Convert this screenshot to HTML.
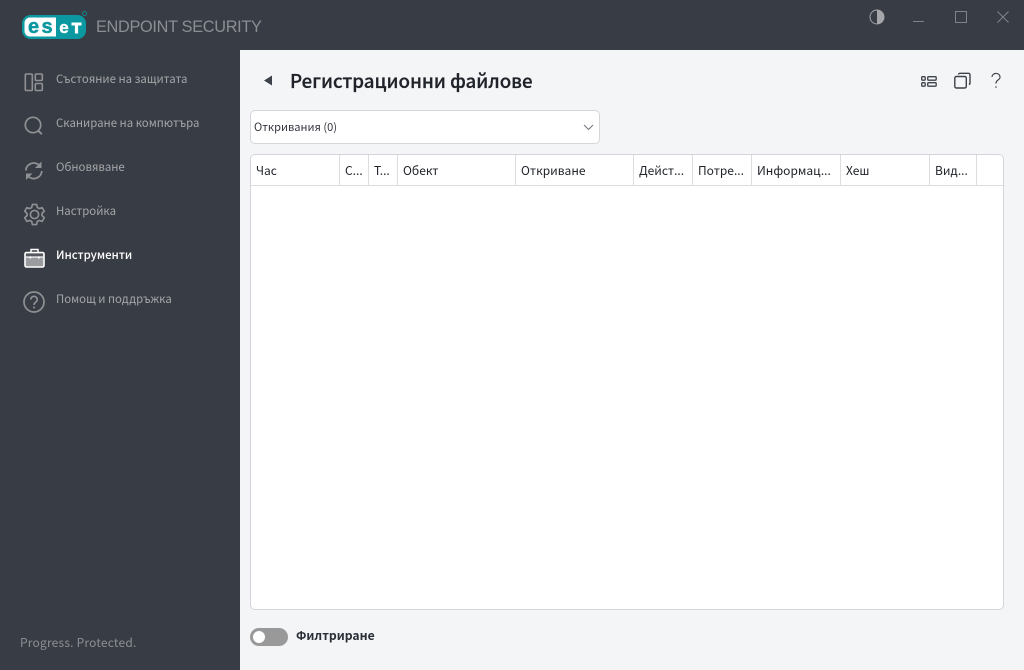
<!DOCTYPE html>
<html><head><meta charset="utf-8">
<style>
*{box-sizing:border-box;margin:0;padding:0}
html,body{width:1024px;height:670px;overflow:hidden;background:#f4f5f7;font-family:"Noto Sans CJK JP","Liberation Sans",sans-serif}
.a{position:absolute;white-space:nowrap}
#top{left:0;top:0;width:1024px;height:50px;background:#383c44}
#side{left:0;top:50px;width:240px;height:620px;background:#383c44}
.n{left:56px;font-size:11.4px;line-height:18px;color:#a4a6a9}
.h{top:162px;font-size:12px;line-height:18px;color:#20232a}
.v{top:155px;width:1px;height:30px;background:#dcdddf}
svg{position:absolute;overflow:visible}
</style></head><body>
<div class="a" id="top"></div><div class="a" id="side"></div>

<svg style="left:22px;top:15px" width="66" height="25" viewBox="0 0 66 25">
<rect x="0" y="0" width="64" height="24" rx="8.500" fill="#0b98a0"/>
<path d="M8 2.500H34V21.500H8a5.500 5.500 0 0 1-5.500-5.500V8A5.500 5.500 0 0 1 8 2.500z" fill="#fff"/>
<text x="11.500" y="18" font-family="Liberation Sans" font-weight="700" font-size="20" fill="#0b98a0" stroke="#0b98a0" stroke-width=".5" text-anchor="middle">e</text>
<text x="25" y="18" font-family="Liberation Sans" font-weight="700" font-size="20" fill="#0b98a0" stroke="#0b98a0" stroke-width=".5" text-anchor="middle">s</text>
<text x="42" y="18" font-family="Liberation Sans" font-weight="700" font-size="17" fill="#fff" stroke="#fff" stroke-width=".4" text-anchor="middle">e</text>
<path d="M49.500 7.500h10v3h-3.400v8h-3.200v-8h-3.400z" fill="#fff"/>
<circle cx="62.500" cy="-1.500" r="2" fill="none" stroke="#0b98a0" stroke-width=".8"/>
</svg>
<div class="a" style="left:96px;top:15px;font-size:16.300px;line-height:24px;color:#8b8e93;font-family:'Liberation Sans',sans-serif;letter-spacing:-.3px">ENDPOINT SECURITY</div>

<svg style="left:869px;top:9px" width="16" height="16" viewBox="0 0 16 16"><circle cx="8" cy="8" r="7" fill="none" stroke="#a4a6a9" stroke-width="1"/><path d="M8 1a7 7 0 0 1 0 14z" fill="#a4a6a9"/></svg>
<svg style="left:913px;top:20px" width="12" height="3"><path d="M0 1.500h11" stroke="#80838a" stroke-width="1"/></svg>
<svg style="left:955px;top:11px" width="12" height="12"><rect x=".5" y=".5" width="11" height="11" fill="none" stroke="#80838a"/></svg>
<svg style="left:997px;top:11px" width="12" height="12"><path d="M.5.5l11 11M11.500.5l-11 11" stroke="#80838a" fill="none"/></svg>

<svg style="left:24px;top:72px" width="20" height="20" fill="none" stroke="#8f9194" stroke-width="1.600"><rect x="1.300" y="2" width="7" height="16.500" rx="1"/><rect x="11.300" y="2" width="7" height="6.500" rx="1"/><rect x="11.300" y="11.500" width="7" height="7" rx="1"/></svg>
<div class="a n" style="top:70px">Състояние на защитата</div>

<svg style="left:24px;top:116px" width="20" height="20" fill="none" stroke="#8f9194" stroke-width="1.700"><circle cx="9" cy="9" r="7.700"/><path d="M14.500 15l3.300 3.200" stroke-width="2"/></svg>
<div class="a n" style="top:114px">Сканиране на компютъра</div>

<svg style="left:24px;top:161px" width="20" height="20" fill="none" stroke="#8f9194" stroke-width="1.800"><path d="M1.800 9.500A8 8 0 0 1 15 4"/><path d="M17.500 0.500v6.500h-6.500z" fill="#8f9194" stroke="none"/><path d="M17.800 10a8 8 0 0 1-13.300 5.500"/><path d="M2 19v-6.500h6.500z" fill="#8f9194" stroke="none"/></svg>
<div class="a n" style="top:158px">Обновяване</div>

<svg style="left:23px;top:203px" width="23" height="23" viewBox="0 0 24 24" fill="none" stroke="#8f9194" stroke-width="1.700"><circle cx="12" cy="12" r="4.300"/><path d="M9.800 1.500h4.400l.7 3.200 2 1.100 3.100-1 2.200 3.800-2.400 2.200v2.400l2.400 2.200-2.200 3.800-3.100-1-2 1.100-.7 3.200H9.800l-.7-3.200-2-1.100-3.100 1-2.200-3.800 2.400-2.200v-2.400L1.800 8.600 4 4.800l3.100 1 2-1.100z" stroke-linejoin="round"/></svg>
<div class="a n" style="top:202px">Настройка</div>

<svg style="left:24px;top:248px" width="21" height="20" viewBox="0 0 21 20"><path d="M7 4.500V1.500h7v3" fill="none" stroke="#fff" stroke-width="1.500"/><rect x="1" y="4.500" width="19" height="14.500" rx="1.500" fill="#9a9b9e" stroke="#fff" stroke-width="1.600"/><rect x="2" y="8.500" width="17" height="1.100" fill="#fff"/><rect x="5.500" y="8" width="1.600" height="2.500" fill="#fff"/><rect x="14" y="8" width="1.600" height="2.500" fill="#fff"/><rect x="2" y="5.500" width="17" height="2.800" fill="#55585f"/></svg>
<div class="a n" style="top:246px;color:#fff;font-weight:500">Инструменти</div>

<svg style="left:23px;top:291px" width="22" height="22" fill="none" stroke="#8f9194" stroke-width="1.700"><circle cx="11" cy="11" r="10"/><path d="M7.800 8.500a3.200 3.200 0 1 1 4.800 2.800c-1.100.7-1.600 1.200-1.600 2.700" stroke-width="1.600"/><circle cx="11" cy="16.500" r="1" fill="#8f9194" stroke="none"/></svg>
<div class="a n" style="top:290px">Помощ и поддръжка</div>

<div class="a" style="left:20px;top:634px;font-size:12px;line-height:18px;color:#8d8f93;letter-spacing:.2px">Progress. Protected.</div>

<svg style="left:263px;top:75px" width="10" height="12"><path d="M9 0.500v10L1 5.500z" fill="#3d4149"/></svg>
<div class="a" style="left:290px;top:67px;font-size:18.700px;line-height:28px;font-weight:500;color:#20232a;-webkit-text-stroke:.25px #20232a">Регистрационни файлове</div>

<svg style="left:921px;top:76px" width="16" height="11" fill="none" stroke="#3d4149" stroke-width="1.300"><rect x=".7" y=".7" width="3.500" height="3.500" rx="1"/><rect x=".7" y="6.700" width="3.500" height="3.500" rx="1"/><rect x="6.700" y=".7" width="8.500" height="3.500" rx="1"/><rect x="6.700" y="6.700" width="8.500" height="3.500" rx="1"/></svg>
<svg style="left:954px;top:72px" width="17" height="17" fill="none" stroke="#3d4149" stroke-width="1.400"><rect x=".8" y="4.500" width="11.500" height="11.500" rx="1.500"/><path d="M4.500 2.500a1.500 1.500 0 0 1 1.500-1.200h8.500a1.500 1.500 0 0 1 1.500 1.500V11a1.500 1.500 0 0 1-1.200 1.500"/></svg>
<svg style="left:991px;top:73px" width="11" height="16" fill="none" stroke="#3d4149" stroke-width="1.200"><path d="M1 4a4 3.500 0 1 1 6 3c-1.500 1-2 1.800-2 3.500"/><circle cx="5" cy="14" r=".8" fill="#3d4149" stroke="none"/></svg>

<div class="a" style="left:250px;top:110px;width:350px;height:34px;background:#fff;border:1px solid #d5d6d9;border-radius:5px"></div>
<div class="a" style="left:254px;top:118px;font-size:11.100px;line-height:18px;color:#33363c">Откривания (0)</div>
<svg style="left:583px;top:124px" width="11" height="7"><path d="M1 1l4.500 4.500L10 1" fill="none" stroke="#777a80" stroke-width="1.100"/></svg>

<div class="a" style="left:250px;top:154px;width:754px;height:456px;background:#fff;border:1px solid #d5d6d9;border-radius:5px"></div>
<div class="a" style="left:251px;top:185px;width:752px;height:1px;background:#dcdddf"></div>
<div class="a v" style="left:339px"></div><div class="a v" style="left:368px"></div><div class="a v" style="left:397px"></div><div class="a v" style="left:515px"></div><div class="a v" style="left:633px"></div><div class="a v" style="left:692px"></div><div class="a v" style="left:751px"></div><div class="a v" style="left:840px"></div><div class="a v" style="left:929px"></div><div class="a v" style="left:976px"></div>
<div class="a h" style="left:256px">Час</div>
<div class="a h" style="left:345px">С...</div>
<div class="a h" style="left:374px">Т...</div>
<div class="a h" style="left:403px">Обект</div>
<div class="a h" style="left:521px">Откриване</div>
<div class="a h" style="left:639px">Дейст...</div>
<div class="a h" style="left:698px">Потре...</div>
<div class="a h" style="left:757px">Информац...</div>
<div class="a h" style="left:846px">Хеш</div>
<div class="a h" style="left:935px">Вид...</div>

<div class="a" style="left:250px;top:628px;width:38px;height:18px;border-radius:9px;background:#999"></div>
<div class="a" style="left:253px;top:631px;width:12px;height:12px;border-radius:50%;background:#fff"></div>
<div class="a" style="left:296px;top:626px;font-size:12.200px;line-height:18px;font-weight:700;color:#2a2e36">Филтриране</div>
</body></html>
